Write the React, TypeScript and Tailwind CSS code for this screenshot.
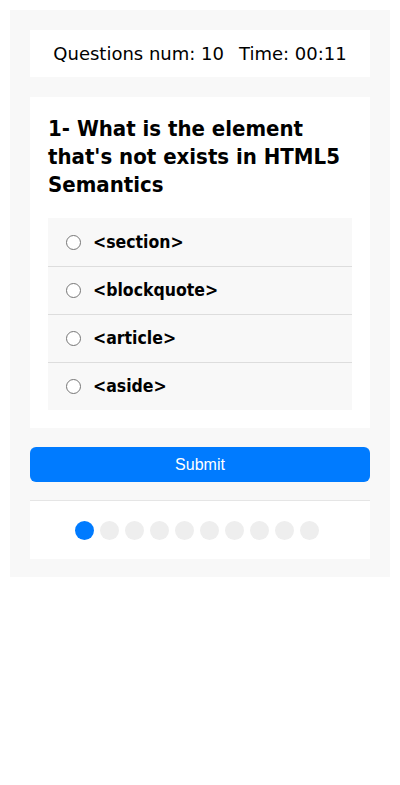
const options = ["<section>", "<blockquote>", "<article>", "<aside>"];

export default function App() {
  const total = 10;
  const current = 0;

  return (
    <div className="min-h-[785px] bg-white p-[10px]" style={{ fontFamily: '"DejaVu Sans Condensed", "DejaVu Sans", sans-serif' }}>
      <div className="bg-[#f8f8f8] px-5 pt-5 pb-[18px]">
        <div
          className="flex h-[47px] items-center justify-center gap-[15px] bg-white text-[18px] text-black"
          style={{ fontFamily: '"DejaVu Sans", sans-serif' }}
        >
          <span>Questions num: 10</span>
          <span>Time: 00:11</span>
        </div>

        <div className="mt-5 bg-white px-[18px] pt-[18px] pb-[18px]">
          <h2 className="text-[22px] font-bold leading-[28px] text-black">
            1- What is the element that's not exists in HTML5 Semantics
          </h2>
          <ul className="mt-[19px] bg-[#f8f8f8]">
            {options.map((opt, i) => (
              <li
                key={opt}
                className={"flex h-12 items-center gap-3 px-[18px] " + (i > 0 ? "border-t border-[#dddddd]" : "")}
              >
                <span className="h-[15px] w-[15px] rounded-full border border-[#767676] bg-white" />
                <span className="text-[17.5px] font-bold text-black">{opt}</span>
              </li>
            ))}
          </ul>
        </div>

        <button
          className="mt-[19px] h-[35px] w-full rounded-md bg-[#007bff] text-[16px] text-white"
          style={{ fontFamily: '"Liberation Sans", Arial, sans-serif' }}
        >
          Submit
        </button>

        <div className="mt-[18px] flex h-[59px] items-center justify-center gap-[6px] border-t border-[#e5e5e5] bg-white pr-[7px]">
          {Array.from({ length: total }).map((_, i) => (
            <span
              key={i}
              className={"h-[19px] w-[19px] rounded-full " + (i === current ? "bg-[#007bff]" : "bg-[#eeeeee]")}
            />
          ))}
        </div>
      </div>
    </div>
  );
}
